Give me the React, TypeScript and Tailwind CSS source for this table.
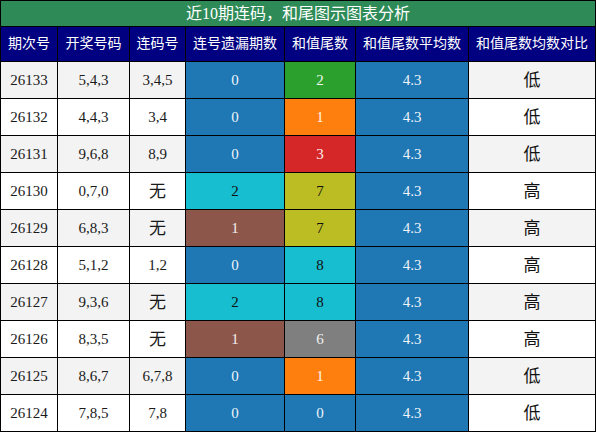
import React from "react";

type Row = {
  id: string;
  nums: string;
  lian: string;
  miss: number;
  tail: number;
  avg: string;
  cmp: string;
};

const rows: Row[] = [
  { id: "26133", nums: "5,4,3", lian: "3,4,5", miss: 0, tail: 2, avg: "4.3", cmp: "低" },
  { id: "26132", nums: "4,4,3", lian: "3,4", miss: 0, tail: 1, avg: "4.3", cmp: "低" },
  { id: "26131", nums: "9,6,8", lian: "8,9", miss: 0, tail: 3, avg: "4.3", cmp: "低" },
  { id: "26130", nums: "0,7,0", lian: "无", miss: 2, tail: 7, avg: "4.3", cmp: "高" },
  { id: "26129", nums: "6,8,3", lian: "无", miss: 1, tail: 7, avg: "4.3", cmp: "高" },
  { id: "26128", nums: "5,1,2", lian: "1,2", miss: 0, tail: 8, avg: "4.3", cmp: "高" },
  { id: "26127", nums: "9,3,6", lian: "无", miss: 2, tail: 8, avg: "4.3", cmp: "高" },
  { id: "26126", nums: "8,3,5", lian: "无", miss: 1, tail: 6, avg: "4.3", cmp: "高" },
  { id: "26125", nums: "8,6,7", lian: "6,7,8", miss: 0, tail: 1, avg: "4.3", cmp: "低" },
  { id: "26124", nums: "7,8,5", lian: "7,8", miss: 0, tail: 0, avg: "4.3", cmp: "低" },
];

const missCls: Record<number, string> = {
  0: "bg-[#1f77b4] text-[#eef4fa]",
  1: "bg-[#8c564b] text-[#f2eceb]",
  2: "bg-[#17becf] text-[#111111]",
};

const tailCls: Record<number, string> = {
  0: "bg-[#1f77b4] text-[#eef4fa]",
  1: "bg-[#ff7f0e] text-[#fff4ea]",
  2: "bg-[#2ca02c] text-[#eef8ee]",
  3: "bg-[#d62728] text-[#fbeeee]",
  6: "bg-[#7f7f7f] text-[#f2f2f2]",
  7: "bg-[#bcbd22] text-[#111111]",
  8: "bg-[#17becf] text-[#111111]",
};

const headers = ["期次号", "开奖号码", "连码号", "连号遗漏期数", "和值尾数", "和值尾数平均数", "和值尾数均数对比"];

export default function App() {
  return (
    <div
      className="w-[596px] h-[432px] bg-black p-px grid gap-px grid-cols-[56px_71px_55px_98px_70px_112px_126px] grid-rows-[25px_34px_repeat(10,36px)]"
      style={{ fontFamily: '"Liberation Serif", "Noto Sans CJK SC", serif' }}
    >
      <div className="col-span-7 bg-[#2e8b57] text-white text-[16px] flex items-center justify-center leading-none">
        近10期连码，和尾图示图表分析
      </div>
      {headers.map((h) => (
        <div key={h} className="bg-[#000080] text-white text-[14px] flex items-center justify-center leading-none whitespace-nowrap">
          {h}
        </div>
      ))}
      {rows.map((r, i) => {
        const base = i % 2 === 0 ? "bg-[#f3f3f3]" : "bg-white";
        const cell = "flex items-center justify-center leading-none";
        return (
          <React.Fragment key={r.id}>
            <div className={`${base} ${cell} text-[#1a1a1a] text-[15px]`}>{r.id}</div>
            <div className={`${base} ${cell} text-[#1a1a1a] text-[15px]`}>{r.nums}</div>
            <div className={`${base} ${cell} text-[#1a1a1a] ${r.lian === "无" ? "text-[17px]" : "text-[15px]"}`}>{r.lian}</div>
            <div className={`${missCls[r.miss]} ${cell} text-[15px]`}>{r.miss}</div>
            <div className={`${tailCls[r.tail]} ${cell} text-[15px]`}>{r.tail}</div>
            <div className={`bg-[#1f77b4] text-[#eef4fa] ${cell} text-[15px]`}>{r.avg}</div>
            <div className={`${base} ${cell} text-[#111111] text-[17px]`}>{r.cmp}</div>
          </React.Fragment>
        );
      })}
    </div>
  );
}
